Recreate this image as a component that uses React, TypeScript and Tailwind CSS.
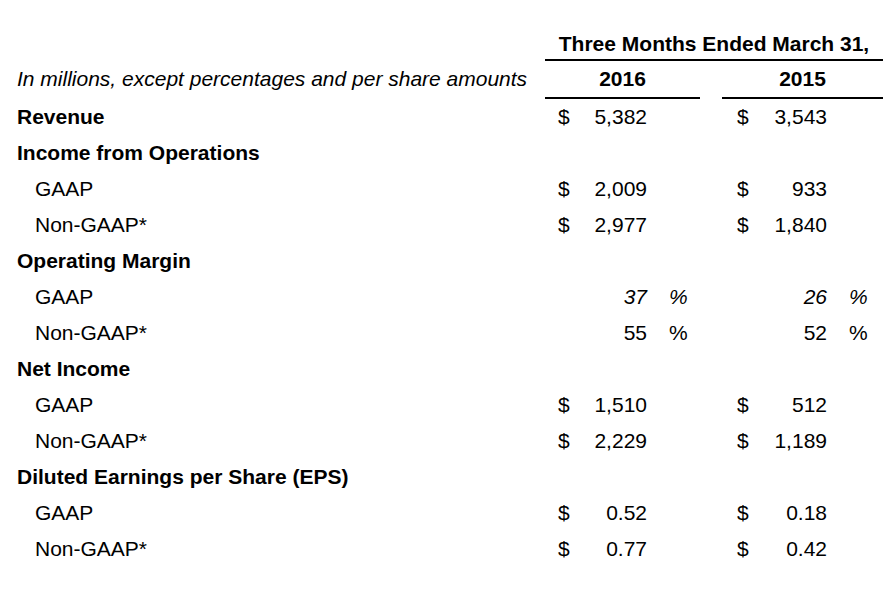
type Cell = { v: string; dollar?: boolean; pct?: boolean; italic?: boolean };
type Row = { label: string; head?: boolean; a?: Cell; b?: Cell };

const rows: Row[] = [
  { label: "Revenue", head: true, a: { v: "5,382", dollar: true }, b: { v: "3,543", dollar: true } },
  { label: "Income from Operations", head: true },
  { label: "GAAP", a: { v: "2,009", dollar: true }, b: { v: "933", dollar: true } },
  { label: "Non-GAAP*", a: { v: "2,977", dollar: true }, b: { v: "1,840", dollar: true } },
  { label: "Operating Margin", head: true },
  { label: "GAAP", a: { v: "37", pct: true, italic: true }, b: { v: "26", pct: true, italic: true } },
  { label: "Non-GAAP*", a: { v: "55", pct: true }, b: { v: "52", pct: true } },
  { label: "Net Income", head: true },
  { label: "GAAP", a: { v: "1,510", dollar: true }, b: { v: "512", dollar: true } },
  { label: "Non-GAAP*", a: { v: "2,229", dollar: true }, b: { v: "1,189", dollar: true } },
  { label: "Diluted Earnings per Share (EPS)", head: true },
  { label: "GAAP", a: { v: "0.52", dollar: true }, b: { v: "0.18", dollar: true } },
  { label: "Non-GAAP*", a: { v: "0.77", dollar: true }, b: { v: "0.42", dollar: true } },
];

const Amount = ({ c, wide }: { c?: Cell; wide?: boolean }) => (
  <div className={`flex items-center ${wide ? "w-[161px] pl-[15px]" : "w-[155px] pl-[13px]"}`}>
    <span className="w-[12px]">{c?.dollar ? "$" : ""}</span>
    <span className={`${wide ? "w-[78px]" : "w-[77px]"} text-right ${c?.italic ? "italic" : ""}`}>{c?.v}</span>
    <span className={`pl-[22px] ${c?.italic ? "italic" : ""}`}>{c?.pct ? "%" : ""}</span>
  </div>
);

export default function App() {
  return (
    <div className="w-[894px] h-[602px] bg-white text-black text-[21px] leading-[24px] font-['Liberation_Sans',Arial,sans-serif]">
      <div className="flex h-[59px] items-end">
        <div className="w-[545px]" />
        <div className="w-[338px] text-center font-bold pb-[3px] whitespace-nowrap">Three Months Ended March 31,</div>
      </div>
      <div className="flex">
        <div className="w-[545px]" />
        <div className="w-[338px] h-[2px] bg-black" />
      </div>
      <div className="flex h-[36px] items-center">
        <div className="w-[545px] pl-[17px] italic whitespace-nowrap">In millions, except percentages and per share amounts</div>
        <div className="w-[155px] text-center font-bold">2016</div>
        <div className="w-[22px]" />
        <div className="w-[161px] text-center font-bold">2015</div>
      </div>
      <div className="flex">
        <div className="w-[545px]" />
        <div className="w-[155px] h-[2px] bg-black" />
        <div className="w-[22px]" />
        <div className="w-[161px] h-[2px] bg-black" />
      </div>
      {rows.map((r, i) => (
        <div key={i} className="flex h-[36px] items-center">
          <div className={`w-[545px] ${r.head ? "pl-[17px] font-bold" : "pl-[35px]"}`}>{r.label}</div>
          <Amount c={r.a} />
          <div className="w-[22px]" />
          <Amount c={r.b} wide />
        </div>
      ))}
    </div>
  );
}
